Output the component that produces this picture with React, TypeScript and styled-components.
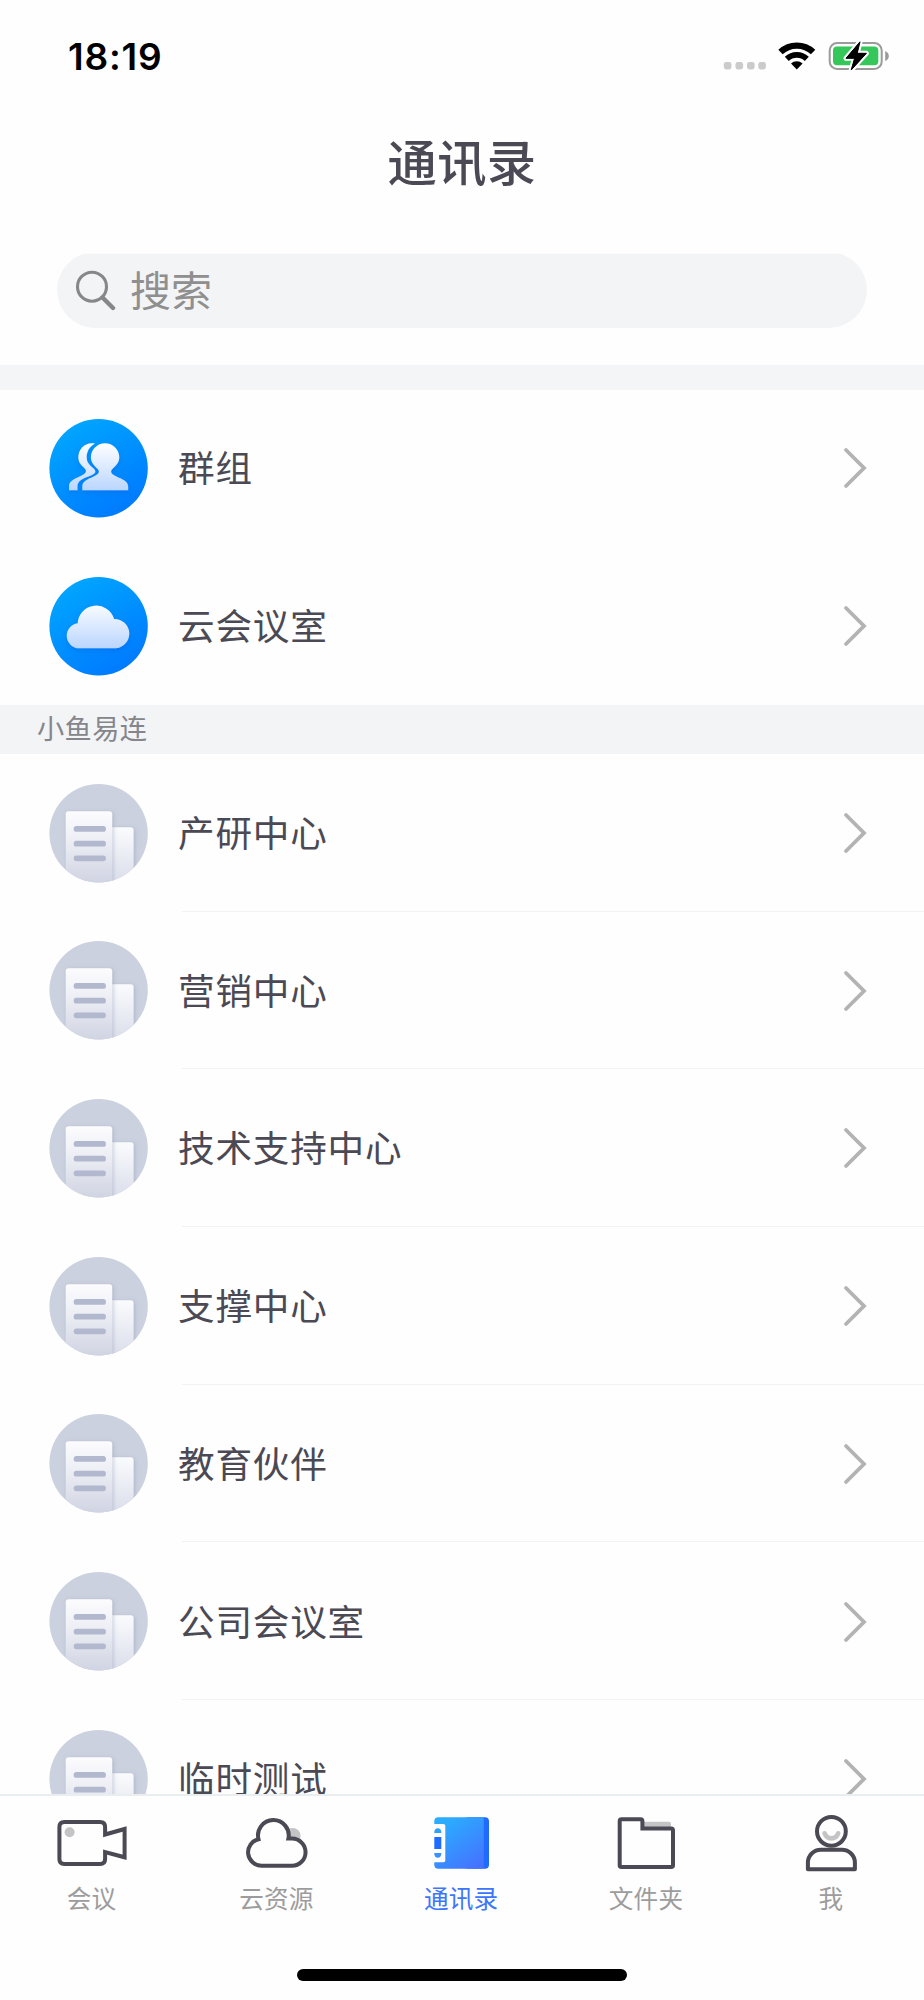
import React from 'react';
import styled, { createGlobalStyle } from 'styled-components';

const GlobalStyle = createGlobalStyle`
  * { box-sizing: border-box; }
  body {
    margin: 0;
    background: #fefefe;
    font-family: "Noto Sans CJK SC", sans-serif;
    color: #4a4954;
  }
`;

const Screen = styled.div`
  width: 924px;
  height: 2000px;
  display: flex;
  flex-direction: column;
  overflow: hidden;
  background: #fefefe;
`;

const StatusBar = styled.header`
  height: 113px;
  padding: 0 35px 0 68px;
  display: flex;
  align-items: center;
  justify-content: space-between;
`;

const Clock = styled.time`
  font-family: Inter, sans-serif;
  font-weight: 600;
  font-size: 37px;
  letter-spacing: 0.8px;
  color: #000;
`;

const StatusIcons = styled.div`
  padding-bottom: 1px;
  display: flex;
  align-items: center;
  gap: 12px;
`;

const Title = styled.h1`
  margin: 0;
  height: 101px;
  padding-bottom: 7px;
  display: flex;
  align-items: center;
  justify-content: center;
  font-size: 49.3px;
  line-height: 1;
  font-weight: 500;
  letter-spacing: 0.3px;
`;

const SearchArea = styled.div`
  height: 151px;
  padding: 38px 57px 0;
`;

const SearchBox = styled.div`
  height: 76px;
  padding-left: 18px;
  display: flex;
  align-items: center;
  gap: 13px;
  border-radius: 38px;
  clip-path: inset(1.7px 0 0 0);
  background: #f3f4f6;
  color: #8f8f8f;
  font-size: 41px;
  line-height: 1;
`;

const SearchHint = styled.span`
  padding-bottom: 4px;
`;

const Band = styled.div`
  flex: none;
  height: 24.6px;
  background: #f3f5f7;
`;

const SectionHeader = styled.div`
  flex: none;
  height: 49.3px;
  padding: 0 0 4px 37px;
  display: flex;
  align-items: center;
  background: #f3f4f6;
  color: #85868b;
  font-size: 27.2px;
  line-height: 1;
  letter-spacing: 0.4px;
`;

const List = styled.main`
  flex: 1;
  min-height: 0;
  overflow: hidden;
  display: flex;
  flex-direction: column;
`;

const Row = styled.div`
  flex: none;
  height: 157.7px;
  padding-left: 49px;
  display: flex;
  align-items: center;
`;

const RowBody = styled.div<{ $divided?: boolean }>`
  flex: 1;
  height: 100%;
  margin-left: 34px;
  padding-right: 56px;
  display: flex;
  align-items: center;
  justify-content: space-between;
  background: ${p => (p.$divided ? 'linear-gradient(#f1f2f4, #f1f2f4) 0 100% / 100% 1.4px no-repeat' : 'none')};
`;

const RowLabel = styled.span`
  margin-left: -4px;
  padding-bottom: 1.4px;
  font-size: 36.6px;
  line-height: 1;
  letter-spacing: 0.8px;
`;

const TabBar = styled.nav`
  flex: none;
  height: 206px;
  border-top: 2px solid #e9eef1;
  display: flex;
  flex-direction: column;
  align-items: center;
`;

const Tabs = styled.div`
  width: 100%;
  height: 172.5px;
  padding-top: 12px;
  display: grid;
  grid-template-columns: repeat(5, 1fr);
`;

const Tab = styled.div<{ $active?: boolean }>`
  display: flex;
  flex-direction: column;
  align-items: center;
  gap: 12.6px;
  color: ${p => (p.$active ? '#3d75fb' : '#9c9c9c')};
`;

const TabLabel = styled.span`
  padding-right: 1.6px;
  font-size: 24.6px;
  line-height: 1;
  letter-spacing: 0.2px;
`;

const HomeIndicator = styled.div`
  width: 330px;
  height: 12.5px;
  border-radius: 7px;
  background: #000;
`;

const INK = '#4a4954';
const SOFT = '#c4c4c7';

const Signal = () => (
  <svg width="43" height="28" viewBox="0 0 43 28">
    {[0.8, 12.5, 24, 35.3].map(x => (
      <rect key={x} x={x} y="19.9" width="7.6" height="7.6" rx="2.4" fill="#cbcbcb" />
    ))}
  </svg>
);

const Wifi = () => (
  <svg width="38" height="28" viewBox="0 0 38 28" fill="none" stroke="#000">
    <path d="M2.5 10A23.9 23.9 0 0 1 35.1 10" strokeWidth="6.4" />
    <path d="M8.8 16.8A14.6 14.6 0 0 1 28.8 16.8" strokeWidth="5.8" />
    <path d="M18.8 27.6L13 21.6A8.2 8.2 0 0 1 24.6 21.6Z" fill="#000" stroke="none" />
  </svg>
);

const Battery = () => (
  <svg width="61" height="30" viewBox="0 0 61 30" overflow="visible">
    <rect x="1.7" y="2" width="52" height="26" rx="7.5" fill="none" stroke="#9b9b9b" strokeWidth="2" />
    <rect x="5" y="5.5" width="45.3" height="18.8" rx="4" fill="#35c759" />
    <path d="M57.2 10Q60.8 11.5 60.8 15T57.2 20Z" fill="#9b9b9b" />
    <path
      d="M32 0.8L18 17.3H26.6L23.2 29L38.4 12.3H29.2Z"
      fill="#000"
      stroke="#fff"
      strokeWidth="5"
      paintOrder="stroke"
      strokeLinejoin="round"
    />
    <path d="M32 0.8L18 17.3H26.6L23.2 29L38.4 12.3H29.2Z" fill="#000" stroke="#000" strokeWidth="1" strokeLinejoin="round" />
  </svg>
);

const SearchIcon = () => (
  <svg width="42" height="42" viewBox="0 0 42 42" fill="none" stroke="#878787" strokeLinecap="round">
    <circle cx="17" cy="17.7" r="14.5" strokeWidth="3.1" />
    <path d="M27.5 28.5L38 39" strokeWidth="4.4" />
  </svg>
);

const Chevron = () => (
  <svg width="26" height="42" viewBox="0 0 26 42">
    <path d="M4 3L22 21L4 39" fill="none" stroke="#b3b3b3" strokeWidth="3.8" strokeLinecap="round" />
  </svg>
);

const Disc = styled.svg.attrs({ viewBox: '0 0 99 99' })`
  flex: none;
  width: 99px;
  height: 99px;
`;

const BlueDisc = ({ id, children }: { id: string; children: React.ReactNode }) => (
  <Disc>
    <defs>
      <linearGradient id={`${id}-bg`} x1="0.2" y1="0.05" x2="0.75" y2="0.95">
        <stop offset="0" stopColor="#00a6ff" />
        <stop offset="1" stopColor="#007aff" />
      </linearGradient>
      <linearGradient id={`${id}-fg`} gradientUnits="userSpaceOnUse" x1="0" y1="24" x2="0" y2="72">
        <stop offset="0" stopColor="#fff" />
        <stop offset="1" stopColor="#b9d5ff" />
      </linearGradient>
      <filter id={`${id}-shadow`} x="-20%" y="-20%" width="140%" height="150%">
        <feDropShadow dx="0" dy="2.5" stdDeviation="2.5" floodColor="#0058d8" floodOpacity="0.35" />
      </filter>
    </defs>
    <circle cx="49.6" cy="49.3" r="49.2" fill={`url(#${id}-bg)`} />
    <g fill={`url(#${id}-fg)`} filter={`url(#${id}-shadow)`} transform="translate(0.3 0)">{children}</g>
  </Disc>
);

const GroupAvatar = () => (
  <BlueDisc id="group">
    <path d="M45.7 24.6C36 22.5 29 30 29 38.5C29 46.5 36.7 48.5 36.7 52C36.7 58 19.7 58 19.7 67.5V71.3H28.2V67.5C28.2 57.5 46 58 46 52.5C46 48.5 37.4 47 37.4 38.5C37.4 32 40.5 27.5 45.7 24.6Z" />
    <path d="M55.8 24.3C63.7 24.3 70 30.6 70 38.5C70 46.5 61.8 49 61.8 52.5C61.8 58.5 78.9 58.5 78.9 67.5V71.3H33V67.5C33 58.5 49.6 58.5 49.6 52.5C49.6 49 41.6 46.5 41.6 38.5C41.6 30.6 47.9 24.3 55.8 24.3Z" />
  </BlueDisc>
);

const CloudAvatar = () => (
  <BlueDisc id="cloud">
    <path d="M28.4 46.3A18.6 18.6 0 0 1 64.8 41.9A14.75 14.75 0 0 1 66.9 71.3H30A12.55 12.55 0 0 1 28.4 46.3Z" />
  </BlueDisc>
);

const OrgAvatar = ({ id }: { id: string }) => (
  <Disc>
    <defs>
      <clipPath id={`${id}-clip`}>
        <circle cx="49.6" cy="49.3" r="49.2" />
      </clipPath>
      <linearGradient id={`${id}-tall`} x1="0" y1="0" x2="0" y2="1">
        <stop offset="0" stopColor="#fcfcfe" />
        <stop offset="0.35" stopColor="#eff0f6" />
        <stop offset="1" stopColor="#cdd1e0" />
      </linearGradient>
      <linearGradient id={`${id}-low`} x1="0" y1="0" x2="0" y2="1">
        <stop offset="0" stopColor="#fafbfd" />
        <stop offset="1" stopColor="#d8dce9" />
      </linearGradient>
      <filter id={`${id}-shadow`} x="-20%" y="-20%" width="140%" height="140%">
        <feDropShadow dx="1" dy="1" stdDeviation="2.2" floodColor="#8d94b8" floodOpacity="0.5" />
      </filter>
    </defs>
    <g clipPath={`url(#${id}-clip)`}>
      <rect width="99" height="99" fill="#cbd1de" />
      <rect x="55" y="43.3" width="29.6" height="60" rx="3" fill={`url(#${id}-low)`} filter={`url(#${id}-shadow)`} />
      <rect x="16.7" y="27.2" width="46.5" height="76" rx="3" fill={`url(#${id}-tall)`} filter={`url(#${id}-shadow)`} />
      {[42, 56.7, 71.4].map(y => (
        <rect key={y} x="24.7" y={y} width="32.2" height="5.8" rx="2.6" fill="#b2b8cd" />
      ))}
    </g>
  </Disc>
);

const TabIcon = ({ children }: { children: React.ReactNode }) => (
  <svg width="80" height="64" viewBox="0 0 80 64" fill="none">{children}</svg>
);

const MeetingIcon = () => (
  <TabIcon>
    <circle cx="17.6" cy="24.3" r="5" fill={SOFT} />
    <path
      d="M53.1 26.5V19Q53.1 14 48.1 14H12.4Q7.4 14 7.4 19V51Q7.4 56 12.4 56H48.1Q53.1 56 53.1 51V44L72.6 49.3V21Z"
      stroke={INK}
      strokeWidth="4"
    />
  </TabIcon>
);

const CloudIcon = () => (
  <TabIcon>
    <circle cx="55.6" cy="28" r="8" fill={SOFT} />
    <path
      d="M21.5 31.2A13.42 13.42 0 0 0 24.6 57.7H55A13.55 13.55 0 0 0 55 30.6H51.4A15.35 15.35 0 1 0 21.5 31.2Z"
      fill="#fefefe"
      stroke={INK}
      strokeWidth="4"
    />
  </TabIcon>
);

const ContactsIcon = () => (
  <TabIcon>
    <defs>
      <linearGradient id="book" x1="0.15" y1="0" x2="0.85" y2="1">
        <stop offset="0.1" stopColor="#2bacff" />
        <stop offset="1" stopColor="#4572ff" />
      </linearGradient>
    </defs>
    <rect x="42" y="9.3" width="25" height="51.5" rx="4" fill="#1f6bff" />
    <path d="M16.3 9.3H59Q61.8 9.3 61.8 12V58Q61.8 60.8 59 60.8H16.3Q12.3 60.8 12.3 56.8V13.3Q12.3 9.3 16.3 9.3Z" fill="url(#book)" />
    <path d="M11 16.1H21.3Q23.3 16.1 23.3 18.1V52.2Q23.3 54.2 21.3 54.2H11Z" fill="#fefefe" />
    <path d="M12.3 25.1V24Q12.6 20.3 15.8 20.3T19.3 24V25.1Z" fill="#2aa3f8" />
    <rect x="12.3" y="29" width="7" height="12" fill="#1f6bff" />
    <path d="M12.3 45V46Q12.6 49.7 15.8 49.7T19.3 46V45Z" fill="#3a90ff" />
  </TabIcon>
);

const FolderIcon = () => (
  <TabIcon>
    <path d="M36 13.7H62.2Q64 13.7 64 15.5V20H36Z" fill={SOFT} />
    <path
      d="M14.4 11.3H33.6Q35.4 11.3 35.4 13.1V20.4H64.2Q66 20.4 66 22.2V57.2Q66 59 64.2 59H14.4Q12.7 59 12.7 57.2V13.1Q12.7 11.3 14.4 11.3Z"
      stroke={INK}
      strokeWidth="4"
    />
  </TabIcon>
);

const MeIcon = () => (
  <TabIcon>
    <path d="M32.6 25.3C34.8 32 44 32 46.2 25.3" stroke={SOFT} strokeWidth="4.6" strokeLinecap="round" />
    <g stroke={INK} strokeWidth="4" strokeLinejoin="round">
      <circle cx="39.4" cy="23.3" r="14.4" />
      <path d="M15.9 61.3V54.7A13 13 0 0 1 28.9 41.7H49.9A13 13 0 0 1 62.9 54.7V61.3Z" />
    </g>
  </TabIcon>
);

const departments = ['产研中心', '营销中心', '技术支持中心', '支撑中心', '教育伙伴', '公司会议室', '临时测试'];

const tabs = [
  { label: '会议', Icon: MeetingIcon },
  { label: '云资源', Icon: CloudIcon },
  { label: '通讯录', Icon: ContactsIcon, active: true },
  { label: '文件夹', Icon: FolderIcon },
  { label: '我', Icon: MeIcon },
];

type EntryProps = { label: string; avatar: React.ReactNode; divided?: boolean };

const Entry = ({ label, avatar, divided }: EntryProps) => (
  <Row>
    {avatar}
    <RowBody $divided={divided}>
      <RowLabel>{label}</RowLabel>
      <Chevron />
    </RowBody>
  </Row>
);

export default function App() {
  return (
    <Screen>
      <GlobalStyle />
      <StatusBar>
        <Clock>18:19</Clock>
        <StatusIcons>
          <Signal />
          <Wifi />
          <Battery />
        </StatusIcons>
      </StatusBar>
      <Title>通讯录</Title>
      <SearchArea>
        <SearchBox>
          <SearchIcon />
          <SearchHint>搜索</SearchHint>
        </SearchBox>
      </SearchArea>
      <List>
        <Band />
        <Entry label="群组" avatar={<GroupAvatar />} />
        <Entry label="云会议室" avatar={<CloudAvatar />} />
        <SectionHeader>小鱼易连</SectionHeader>
        {departments.map((name, i) => (
          <Entry key={name} label={name} avatar={<OrgAvatar id={`org${i}`} />} divided />
        ))}
      </List>
      <TabBar>
        <Tabs>
          {tabs.map(({ label, Icon, active }) => (
            <Tab key={label} $active={active}>
              <Icon />
              <TabLabel>{label}</TabLabel>
            </Tab>
          ))}
        </Tabs>
        <HomeIndicator />
      </TabBar>
    </Screen>
  );
}
